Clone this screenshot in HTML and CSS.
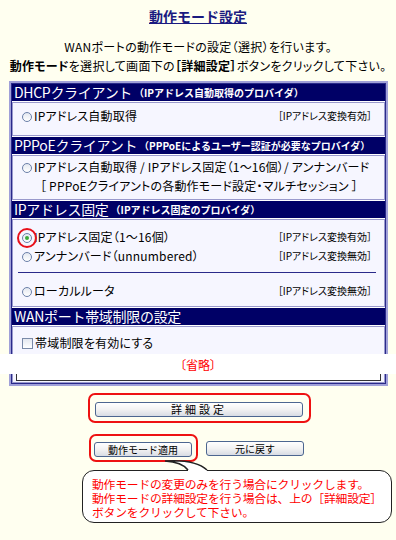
FILE: index.html
```html
<!DOCTYPE html>
<html lang="ja">
<head>
    <meta charset="UTF-8">
    <title>動作モード設定</title>
    <link rel="stylesheet" href="styles.css">
</head>
<body>

    <!-- Title -->
    <div class="title">
        <h1>動作モード設定</h1>
    </div>
    <div class="intro">
        <p>WANポートの動作モードの設定（選択）を行います。</p>
        <p><b>動作モード</b>を選択して画面下の<b>［詳細設定］</b>ボタンをクリックして下さい。</p>
    </div>

    <!-- Mode panel -->
    <div class="panel">
        <div class="sec-head">DHCPクライアント<small>（IPアドレス自動取得のプロバイダ）</small></div>
        <div class="sec-body dhcp">
            <div class="row">
                <span><i class="radio"></i>IPアドレス自動取得</span>
                <span class="note">［IPアドレス変換有効］</span>
            </div>
        </div>

        <div class="sec-head">PPPoEクライアント<small>（PPPoEによるユーザー認証が必要なプロバイダ）</small></div>
        <div class="sec-body pppoe">
            <div class="row"><span><i class="radio"></i>IPアドレス自動取得 / IPアドレス固定（1～16個）/ アンナンバード</span></div>
            <div class="row sub">［ PPPoEクライアントの各動作モード設定・マルチセッション ］</div>
        </div>

        <div class="sec-head">IPアドレス固定<small>（IPアドレス固定のプロバイダ）</small></div>
        <div class="sec-body fixed">
            <div class="row">
                <span><i class="radio checked"><em class="ring"></em></i>IPアドレス固定（1～16個）</span>
                <span class="note">［IPアドレス変換有効］</span>
            </div>
            <div class="row">
                <span><i class="radio"></i>アンナンバード（unnumbered）</span>
                <span class="note">［IPアドレス変換無効］</span>
            </div>
            <hr>
            <div class="row">
                <span><i class="radio"></i>ローカルルータ</span>
                <span class="note">［IPアドレス変換無効］</span>
            </div>
        </div>

        <div class="sec-head">WANポート帯域制限の設定</div>
        <div class="sec-body wan">
            <div class="row"><span><i class="check"></i>帯域制限を有効にする</span></div>
        </div>
    </div>

    <div class="omit">〔省略〕</div>

    <div class="panel-end">
        <div class="sec-body cut">
            <div class="omit-box"></div>
        </div>
    </div>

    <!-- Buttons -->
    <div class="btn-line">
        <div class="mark wide">
            <button class="btn spaced">詳細設定</button>
        </div>
    </div>
    <div class="btn-line pair">
        <div class="mark">
            <button class="btn small">動作モード適用</button>
        </div>
        <button class="btn small">元に戻す</button>
    </div>

    <!-- Callout -->
    <div class="bubble">
        <svg class="tail" width="50" height="16" viewBox="0 0 50 16">
            <path d="M26 16 L26 12 Q20 4 3 3 Q33 1 45 12 L45 16 Z" fill="#fff"/>
            <path d="M26 12 Q20 4 3 3 Q33 1 45 12" fill="none" stroke="#222" stroke-width="1.5"/>
        </svg>
        <p>動作モードの変更のみを行う場合にクリックします。</p>
        <p>動作モードの詳細設定を行う場合は、上の［詳細設定］</p>
        <p>ボタンをクリックして下さい。</p>
    </div>

</body>
</html>
```

FILE: styles.css
```css
/* Base */
body, h1, p, button {
    margin: 0;
    padding: 0;
}
body {
    background-color: #fffff0;
    font-family: "Noto Sans CJK JP", "Liberation Sans", sans-serif;
    font-size: 12px;
    color: #000;
    width: 396px;
    font-feature-settings: "palt";
}

/* Title */
.title {
    padding-top: 8px;
    text-align: center;
}
.title h1 {
    font-size: 14px;
    line-height: 17px;
    color: #1a1a80;
    text-decoration: underline;
    font-weight: bold;
    font-feature-settings: normal;
}
.intro {
    margin-top: 12px;
    text-align: center;
    line-height: 19px;
    letter-spacing: 0.3px;
    white-space: nowrap;
}

/* Panel */
.panel, .panel-end {
    margin-left: 9px;
    width: 379px;
    box-sizing: border-box;
    border: 2px solid #a0a0d8;
    box-shadow: inset 0 0 0 1px #2a2a8a;
    background-color: #fff;
}
.panel {
    margin-top: 6px;
    border-bottom: none;
    padding: 1px 1px 0;
}
.panel-end {
    border-top: none;
    padding: 0 1px 1px;
}
.sec-head {
    height: 17px;
    line-height: 17px;
    background-color: #000066;
    color: #fff;
    font-size: 14px;
    padding-left: 2px;
    margin-bottom: 1px;
    white-space: nowrap;
    font-feature-settings: normal;
    letter-spacing: -0.3px;
}
.sec-head small {
    font-size: 10px;
    font-weight: bold;
    margin-left: 2px;
    letter-spacing: 0;
    vertical-align: 1px;
}
.sec-body {
    border: 1px solid #9999cc;
    background-color: #f6f6ff;
    padding: 0 12px 0 9px;
    margin-bottom: 1px;
}
.sec-body.dhcp {
    padding-top: 3px;
    padding-bottom: 10px;
}
.sec-body.pppoe {
    padding-top: 1px;
    padding-bottom: 4px;
}
.sec-body.fixed {
    padding-top: 7px;
    padding-bottom: 6px;
}
.sec-body.wan {
    padding-top: 6px;
    height: 21px;
    border-bottom: none;
    margin-bottom: 0;
}
.sec-body.cut {
    border-top: none;
    padding: 0 3px 1px;
    margin-bottom: 0;
}
.row {
    display: flex;
    justify-content: space-between;
    align-items: center;
    line-height: 19px;
    letter-spacing: 0.2px;
    white-space: nowrap;
}
.row.sub {
    padding-left: 18px;
}
.note {
    font-size: 10px;
    letter-spacing: 0;
}
.sec-body hr {
    border: none;
    border-top: 1px solid #2a2a8a;
    margin: 7px -4px 8px -4px;
}

/* Radio / checkbox */
.radio, .check {
    display: inline-block;
    position: relative;
    width: 8px;
    height: 8px;
    border: 1px solid #6a7fa8;
    background: linear-gradient(#e4e8f0, #ffffff);
    margin-right: 2px;
    vertical-align: -1px;
}
.radio {
    border-radius: 50%;
}
.radio.checked::after {
    content: "";
    position: absolute;
    left: 2px;
    top: 2px;
    width: 4px;
    height: 4px;
    border-radius: 50%;
    background-color: #3cab3c;
}
.radio .ring {
    position: absolute;
    left: -6px;
    top: -6px;
    width: 16px;
    height: 16px;
    border: 2px solid #e8101a;
    border-radius: 50%;
}
.check {
    width: 9px;
    height: 9px;
    border-color: #7a8aa8;
}

/* Omitted part */
.omit {
    height: 20px;
    line-height: 22px;
    background-color: #fff;
    color: #ff0000;
    text-align: center;
    font-size: 12px;
}
.omit-box {
    height: 6px;
    border: 1px solid #333;
    border-top: none;
    background-color: #fff;
}

/* Buttons */
.btn-line {
    display: flex;
    align-items: center;
    gap: 8px;
    margin-top: 7px;
    padding-left: 88px;
}
.btn-line.pair {
    margin-top: 11px;
    padding-left: 89px;
}
.mark {
    border: 2px solid #ee1111;
    border-radius: 7px;
    padding: 4px 4px 3px 3px;
}
.mark.wide {
    padding: 5px 6px 4px 5px;
}
.btn {
    font-family: "Noto Sans CJK JP", sans-serif;
    font-size: 10px;
    line-height: 13px;
    height: 15px;
    border: 1px solid #4c6690;
    border-radius: 3px;
    background: linear-gradient(#ffffff, #f2f2f2 50%, #d8dce4);
    color: #000;
    cursor: pointer;
}
.btn.spaced {
    width: 208px;
    letter-spacing: 3px;
    font-size: 11px;
}
.btn.small {
    width: 98px;
}

/* Callout */
.bubble {
    position: relative;
    margin: 8px 0 0 82px;
    width: 310px;
    box-sizing: border-box;
    border: 1.5px solid #222;
    border-radius: 12px;
    background-color: #fff;
    padding: 6px 4px 3px 9px;
    color: #ff0000;
    font-size: 11.8px;
    line-height: 14px;
    letter-spacing: -0.2px;
    font-feature-settings: normal;
    white-space: nowrap;
}
.tail {
    position: absolute;
    left: 79px;
    top: -13px;
}
```
